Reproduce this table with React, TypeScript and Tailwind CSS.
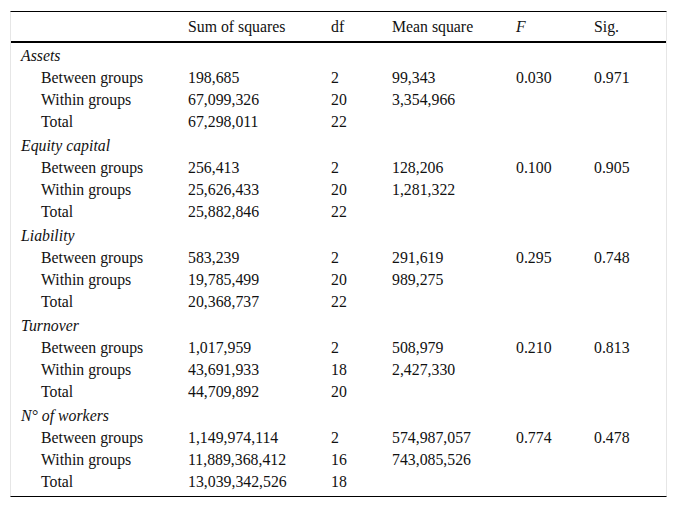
const groups = [
  {
    name: "Assets",
    rows: [
      ["Between groups", "198,685", "2", "99,343", "0.030", "0.971"],
      ["Within groups", "67,099,326", "20", "3,354,966", "", ""],
      ["Total", "67,298,011", "22", "", "", ""],
    ],
  },
  {
    name: "Equity capital",
    rows: [
      ["Between groups", "256,413", "2", "128,206", "0.100", "0.905"],
      ["Within groups", "25,626,433", "20", "1,281,322", "", ""],
      ["Total", "25,882,846", "22", "", "", ""],
    ],
  },
  {
    name: "Liability",
    rows: [
      ["Between groups", "583,239", "2", "291,619", "0.295", "0.748"],
      ["Within groups", "19,785,499", "20", "989,275", "", ""],
      ["Total", "20,368,737", "22", "", "", ""],
    ],
  },
  {
    name: "Turnover",
    rows: [
      ["Between groups", "1,017,959", "2", "508,979", "0.210", "0.813"],
      ["Within groups", "43,691,933", "18", "2,427,330", "", ""],
      ["Total", "44,709,892", "20", "", "", ""],
    ],
  },
  {
    name: "N° of workers",
    rows: [
      ["Between groups", "1,149,974,114", "2", "574,987,057", "0.774", "0.478"],
      ["Within groups", "11,889,368,412", "16", "743,085,526", "", ""],
      ["Total", "13,039,342,526", "18", "", "", ""],
    ],
  },
];

export default function App() {
  return (
    <div className="min-h-screen bg-white pt-[11px] px-[10px] text-[15.8px] text-[#111]" style={{ fontFamily: '"Liberation Serif", "Times New Roman", serif' }}>
      <div className="w-[657px] border-x border-[#e6e6e6] pb-[3px] border-b border-b-black border-t border-t-black">
        <table className="w-full table-fixed border-collapse text-left">
          <colgroup>
            <col className="w-[167px]" />
            <col className="w-[143px]" />
            <col className="w-[61px]" />
            <col className="w-[124px]" />
            <col className="w-[78px]" />
            <col />
          </colgroup>
          <thead>
            <tr className="h-[30px] border-b-2 border-black">
              <th className="pl-[10px] font-normal"></th>
              <th className="pl-[10px] font-normal">Sum of squares</th>
              <th className="pl-[10px] font-normal">df</th>
              <th className="pl-[10px] font-normal">Mean square</th>
              <th className="pl-[10px] font-normal italic">F</th>
              <th className="pl-[10px] font-normal">Sig.</th>
            </tr>
          </thead>
          <tbody>
            {groups.map((g) => (
              <>
                <tr key={g.name} className="h-[24px]">
                  <td colSpan={6} className="pl-[10px] pt-[2px] italic leading-[22px]">
                    {g.name}
                  </td>
                </tr>
                {g.rows.map((r, ri) => (
                  <tr key={g.name + ri} className="h-[22px]">
                    {r.map((c, ci) => (
                      <td key={ci} className={"leading-[22px] " + (ci === 0 ? "pl-[30px]" : "pl-[10px]")}>
                        {c}
                      </td>
                    ))}
                  </tr>
                ))}
              </>
            ))}
          </tbody>
        </table>
      </div>
    </div>
  );
}
